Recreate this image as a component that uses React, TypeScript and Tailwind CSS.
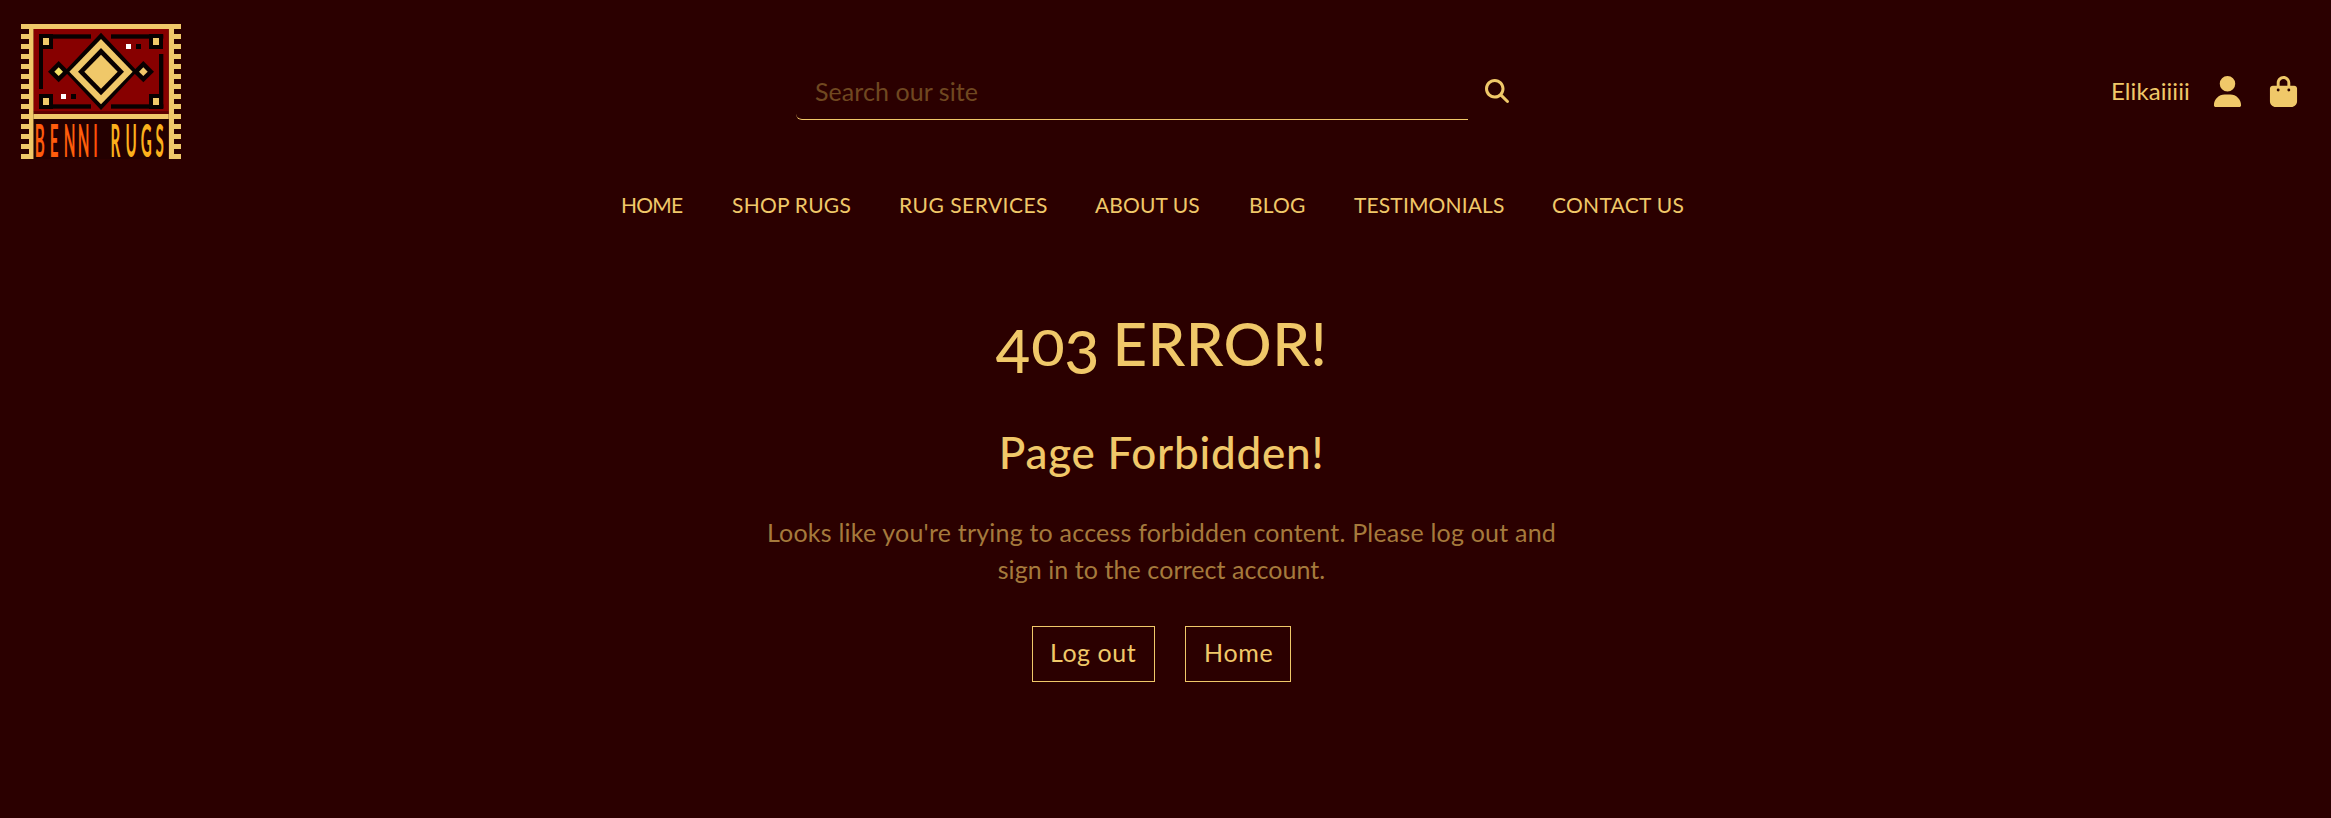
import { FaBagShopping, FaMagnifyingGlass, FaUser } from "react-icons/fa6";

const TEETH = Array.from({ length: 14 }, (_, i) => 27 + i * 30);

const NAV = [
  { label: "HOME", className: "w-[111px] tracking-[-0.78px]" },
  { label: "SHOP RUGS", className: "w-[167px] tracking-[0.24px]" },
  { label: "RUG SERVICES", className: "w-[196px] tracking-[0.48px]" },
  { label: "ABOUT US", className: "w-[154px] tracking-[0.1px]" },
  { label: "BLOG", className: "w-[105px] tracking-[0.18px]" },
  { label: "TESTIMONIALS", className: "w-[198px] tracking-[0.14px]" },
  { label: "CONTACT US", className: "w-[140px] tracking-[0.27px]" },
];

function Diamond({ cx, cy, rx, ry, fill }: { cx: number; cy: number; rx: number; ry: number; fill: string }) {
  return <path d={`M${cx} ${cy - ry}L${cx + rx} ${cy}L${cx} ${cy + ry}L${cx - rx} ${cy}Z`} fill={fill} />;
}

function Corner({ x, y }: { x: number; y: number }) {
  return (
    <g>
      <rect x={x} y={y} width="42" height="45" fill="#080000" />
      <rect x={x + 12} y={y + 12} width="18" height="21" fill="#f0c869" />
    </g>
  );
}

function Logo() {
  return (
    <svg className="h-[135px] w-[160px] shrink-0 overflow-visible" viewBox="33 27 480 405" role="img">
      <defs>
        <linearGradient id="ember" x1="0" y1="0" x2="1" y2="0">
          <stop offset="0" stopColor="#ff5a0c" />
          <stop offset="0.85" stopColor="#ff5f0a" />
          <stop offset="1" stopColor="#ff4a08" />
        </linearGradient>
      </defs>
      <rect x="57" y="27" width="435" height="15" fill="#f0c869" />
      {TEETH.map((y) => (
        <g key={y} fill="#f0c869">
          <rect x="33" y={y} width="25" height="15" />
          <rect x="491" y={y} width="22" height="15" />
        </g>
      ))}
      <rect x="57" y="27" width="14" height="405" fill="#f0c869" />
      <rect x="476" y="27" width="16" height="405" fill="#f0c869" />
      <rect x="71" y="42" width="405" height="248" fill="#870000" />
      <rect x="71" y="289" width="405" height="9" fill="#5c0000" />
      <rect x="71" y="297" width="405" height="15" fill="#f0c869" />
      <rect x="71" y="312" width="405" height="120" fill="#230000" />
      <g fill="#080000">
        <rect x="87" y="58" width="156" height="13" />
        <rect x="303" y="58" width="157" height="13" />
        <rect x="87" y="58" width="12" height="164" />
        <rect x="447" y="117" width="13" height="163" />
        <rect x="87" y="268" width="156" height="13" />
        <rect x="303" y="268" width="157" height="13" />
      </g>
      <Corner x={87} y={57} />
      <Corner x={417} y={57} />
      <Corner x={87} y={237} />
      <Corner x={417} y={237} />
      <Diamond cx={273} cy={169} rx={109} ry={116} fill="#080000" />
      <Diamond cx={146} cy={170} rx={32} ry={32} fill="#080000" />
      <Diamond cx={400} cy={170} rx={32} ry={32} fill="#080000" />
      <Diamond cx={273} cy={170} rx={95} ry={98} fill="#f0c869" />
      <Diamond cx={273} cy={170} rx={69} ry={71} fill="#080000" />
      <Diamond cx={273} cy={170} rx={50} ry={51} fill="#f0c869" />
      <Diamond cx={146} cy={170} rx={13} ry={13} fill="#f5e063" />
      <Diamond cx={400} cy={170} rx={13} ry={13} fill="#f0c869" />
      <rect x="348" y="87" width="15" height="15" fill="#fff" />
      <rect x="378" y="87" width="15" height="15" fill="#080000" />
      <rect x="153" y="237" width="15" height="15" fill="#fff" />
      <rect x="183" y="237" width="15" height="15" fill="#080000" />
      <g transform="scale(0.33 1)" className="font-['Lato',sans-serif] text-[138px] font-bold">
        <text x="225 362 489 616 758" y="426" fill="url(#ember)">BENNI</text>
        <text x="913 1050 1188 1322" y="426" fill="#fcb01c">RUGS</text>
      </g>
    </svg>
  );
}

export default function App() {
  return (
    <div className="min-h-[818px] w-full bg-[#2b0000] font-['Lato',sans-serif] text-[#f0c869]">
      <header>
        <div className="flex items-start pt-6 pr-8 pl-[21px]">
          <Logo />
          <form className="mt-[38px] ml-[615px] flex h-[58px] items-center">
            <input
              type="text"
              placeholder="Search our site"
              className="h-[58px] w-[672px] rounded-bl-[6px] border-b border-[#f0c869] bg-transparent pl-[19px] text-[25px] tracking-[0.07px] outline-none placeholder:text-[#704820] placeholder:opacity-100"
            />
            <button type="button" className="ml-[17px]">
              <FaMagnifyingGlass size={24} />
            </button>
          </form>
          <div className="mt-[38px] ml-auto flex h-[58px] items-center">
            <span className="w-[101px] text-2xl whitespace-nowrap tracking-[0.07px]">Elikaiiiii</span>
            <FaUser size={31} />
            <FaBagShopping size={31} className="ml-[25px]" />
          </div>
        </div>
        <nav className="mt-[30px] flex h-8 items-center pl-[621px] text-[21px] whitespace-nowrap">
          {NAV.map(({ label, className }) => (
            <a key={label} href="#" className={className}>
              {label}
            </a>
          ))}
        </nav>
      </header>
      <main className="flex flex-col items-center pt-[92px] pr-2 text-center">
        <h1 className="flex h-[60px] w-[332px] items-baseline text-[60px] leading-[60px] font-medium whitespace-nowrap">
          <span className="inline-block w-[35px] translate-y-[7px]">4</span>
          <span className="inline-block w-[34px] scale-x-115 text-[50px]">0</span>
          <span className="inline-block w-[35px] translate-y-[8px]">3</span>
          <span className="ml-[13px] tracking-[0.44px]">ERROR!</span>
        </h1>
        <h2 className="mt-[57px] text-[44px] leading-[44px] font-medium tracking-[0.78px]">Page Forbidden!</h2>
        <p className="mt-[40px] w-[820px] text-[25px] leading-[37px] tracking-[0.21px] text-[#a57a3c]">
          Looks like you're trying to access forbidden content. Please log out and
          <br />
          <span className="tracking-[0.08px]">sign in to the correct account.</span>
        </p>
        <div className="mt-[38px] flex gap-[30px] text-left text-[25px]">
          <button className="h-14 w-[123px] border border-[#f0c869] pb-[3px] pl-[17px] text-left whitespace-nowrap tracking-[0.53px]">Log out</button>
          <button className="h-14 w-[106px] border border-[#f0c869] pb-[3px] pl-[18px] text-left whitespace-nowrap tracking-[0.7px]">Home</button>
        </div>
      </main>
    </div>
  );
}
